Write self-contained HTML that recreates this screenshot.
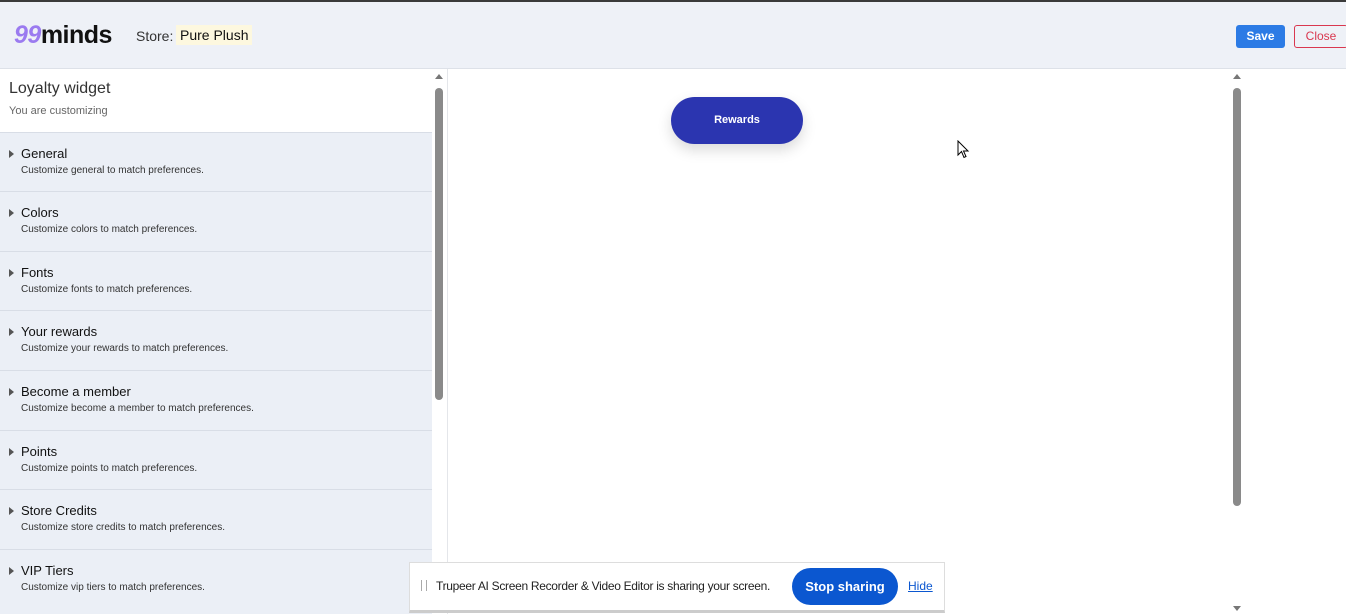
<!DOCTYPE html><html><head><style>
html,body{margin:0;width:1346px;height:614px;overflow:hidden}
body{background:#fff;font-family:"Liberation Sans",sans-serif;position:relative}
.top{position:absolute;left:0;top:0;width:1346px;height:2px;background:#3a3a3a}
.hdr{position:absolute;left:0;top:2px;width:1346px;height:66px;background:#eef1f7;border-bottom:1px solid #dde1e8}
.logo{position:absolute;left:14px;top:19px;font-size:25px;font-weight:bold;color:#111;letter-spacing:-0.5px}
.logo span{color:#9b7bf0;font-style:italic}
.store{position:absolute;left:136px;top:26px;font-size:14px;color:#333}
.pp{position:absolute;left:176px;top:23px;background:#fdf8df;padding:2px 4px;font-size:14px;color:#111}
.save{position:absolute;left:1236px;top:23px;width:49px;height:23px;background:#2c7be5;color:#fff;border-radius:3px;font-size:12px;font-weight:bold;text-align:center;line-height:23px}
.close{position:absolute;left:1294px;top:23px;width:52px;height:21px;border:1px solid #d9374f;color:#d9374f;border-radius:3px;font-size:12px;text-align:center;line-height:21px}
.left{position:absolute;left:0;top:69px;width:432px;height:545px;background:#fff}
.lt{position:absolute;left:9px;top:80px;font-size:16px;color:#333}
.ls{position:absolute;left:9px;top:105px;font-size:11px;color:#666}
.item{position:absolute;left:0;width:432px;height:59px;background:#ebeff6;border-top:1px solid #d8dde6}
.item .t{position:absolute;left:21px;top:13px;font-size:13px;color:#111}
.item .d{position:absolute;left:21px;top:32px;font-size:10px;color:#333}
.item .a{position:absolute;left:9px;top:17px;width:0;height:0;border-left:5px solid #555;border-top:4px solid transparent;border-bottom:4px solid transparent}
.sb{position:absolute;left:435px;top:88px;width:8px;height:312px;background:#8a8a8a;border-radius:4px}
.vline{position:absolute;left:447px;top:69px;width:1px;height:545px;background:#e4e6ea}
.sb2{position:absolute;left:1233px;top:88px;width:8px;height:418px;background:#8a8a8a;border-radius:4px}
.up{position:absolute;width:0;height:0;border-left:4px solid transparent;border-right:4px solid transparent;border-bottom:5px solid #777}
.dn{position:absolute;width:0;height:0;border-left:4px solid transparent;border-right:4px solid transparent;border-top:5px solid #777}
.rew{position:absolute;left:671px;top:97px;width:132px;height:47px;background:#2b35b0;border-radius:24px;color:#fff;font-size:11px;font-weight:bold;text-align:center;line-height:47px;box-shadow:0 6px 14px rgba(0,0,0,0.15)}
.bar{position:absolute;left:409px;top:562px;width:534px;height:47px;background:#fff;border:1px solid #ddd;border-bottom:3px solid #ccc}
.bar .tx{position:absolute;left:26px;top:16px;font-size:12px;color:#222;letter-spacing:-0.3px}
.bar .g{position:absolute;left:11px;top:17px;width:4px;height:11px;border-left:1px solid #aaa;border-right:1px solid #aaa}
.stop{position:absolute;left:382px;top:5px;width:106px;height:37px;background:#0b57d0;border-radius:19px;color:#fff;font-size:13px;font-weight:bold;text-align:center;line-height:37px}
.hide{position:absolute;left:498px;top:16px;font-size:12px;color:#0b57d0;text-decoration:underline}
</style></head><body>
<div class="top"></div>
<div class="hdr">
<div class="logo"><span>99</span>minds</div>
<div class="store">Store:</div><div class="pp">Pure Plush</div>
<div class="save">Save</div><div class="close">Close</div>
</div>
<div class="left"></div>
<div class="lt">Loyalty widget</div><div class="ls">You are customizing</div>
<div class="item" style="top:132px"><div class="a"></div><div class="t">General</div><div class="d">Customize general to match preferences.</div></div>
<div class="item" style="top:191px"><div class="a"></div><div class="t">Colors</div><div class="d">Customize colors to match preferences.</div></div>
<div class="item" style="top:251px"><div class="a"></div><div class="t">Fonts</div><div class="d">Customize fonts to match preferences.</div></div>
<div class="item" style="top:310px"><div class="a"></div><div class="t">Your rewards</div><div class="d">Customize your rewards to match preferences.</div></div>
<div class="item" style="top:370px"><div class="a"></div><div class="t">Become a member</div><div class="d">Customize become a member to match preferences.</div></div>
<div class="item" style="top:430px"><div class="a"></div><div class="t">Points</div><div class="d">Customize points to match preferences.</div></div>
<div class="item" style="top:489px"><div class="a"></div><div class="t">Store Credits</div><div class="d">Customize store credits to match preferences.</div></div>
<div class="item" style="top:549px;height:64px"><div class="a"></div><div class="t">VIP Tiers</div><div class="d">Customize vip tiers to match preferences.</div></div>
<div class="up" style="left:435px;top:74px"></div>
<div class="sb"></div>
<div class="vline"></div>
<div class="up" style="left:1233px;top:74px"></div>
<div class="dn" style="left:1233px;top:606px"></div>
<div class="sb2"></div>
<div class="rew">Rewards</div>
<svg style="position:absolute;left:957px;top:140px" width="13" height="20" viewBox="0 0 13 20"><path d="M1 1 L1 15 L4.5 11.5 L7 17.5 L9 16.5 L6.5 11 L11 11 Z" fill="#fff" stroke="#000" stroke-width="1"/></svg>
<div class="bar"><div class="g"></div><div class="tx">Trupeer AI Screen Recorder &amp; Video Editor is sharing your screen.</div><div class="stop">Stop sharing</div><div class="hide">Hide</div></div>
</body></html>
